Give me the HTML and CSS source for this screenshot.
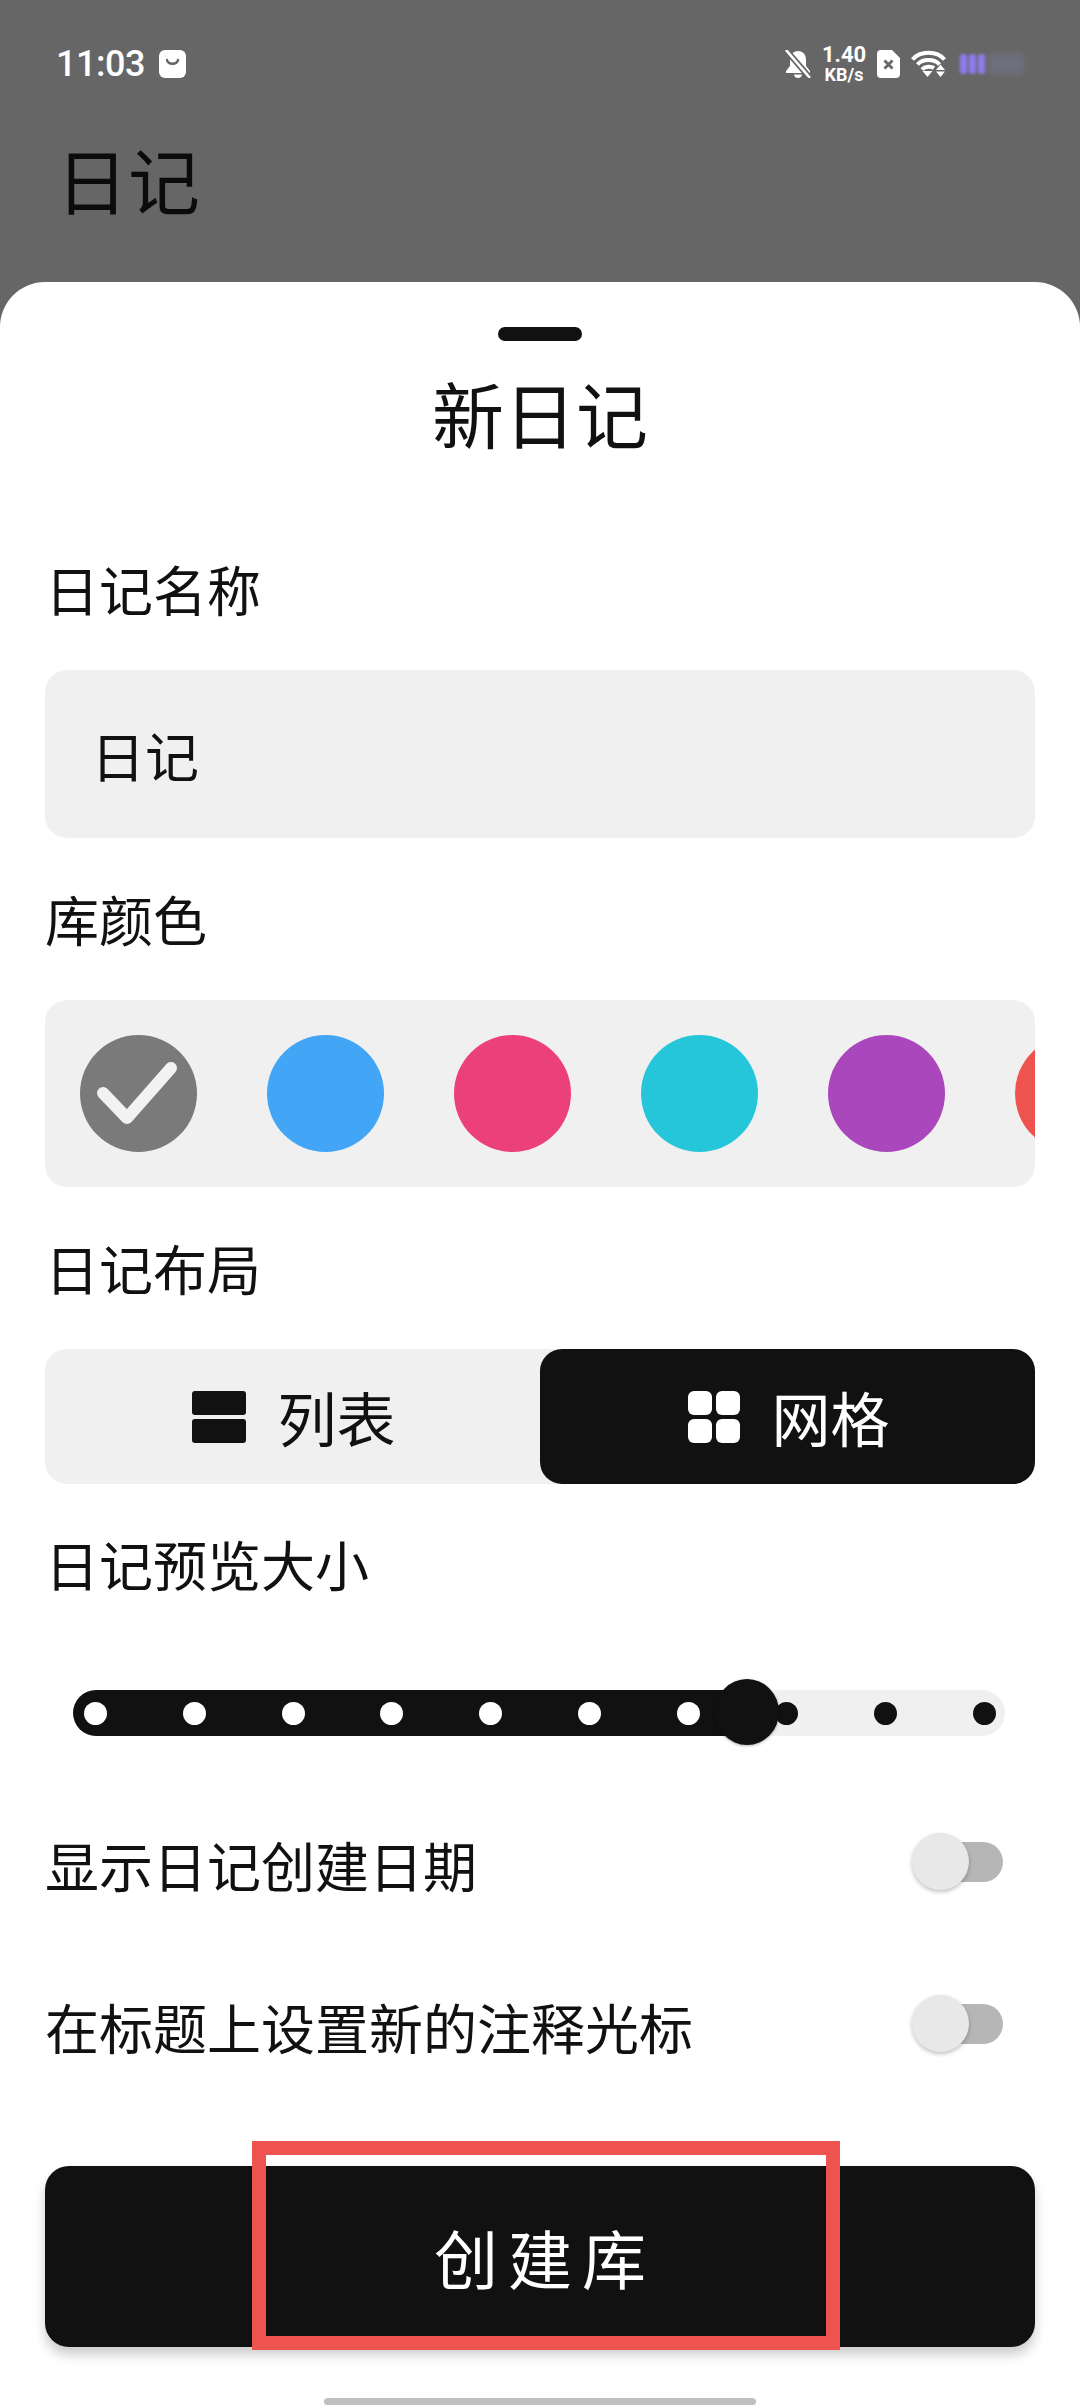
FILE: index.html
```html
<!DOCTYPE html>
<html lang="zh-CN">
<head>
  <meta charset="UTF-8" />
  <meta name="viewport" content="width=device-width, initial-scale=1" />
  <title>新日记</title>
  <link rel="stylesheet" href="styles.css">
</head>
<body>
  <div class="screen">

    <div class="status-bar">
      <div class="status-left">
        <span class="clock">11:03</span>
        <svg class="bag-icon" width="27" height="28" viewBox="0 0 27 28">
          <rect width="27" height="28" rx="6" fill="#fff" />
          <path d="M8 10c1 5 10 5 11 0" fill="none" stroke="#666" stroke-width="2.4" stroke-linecap="round" />
        </svg>
      </div>
      <div class="status-right">
        <svg width="26" height="28" viewBox="0 0 26 28">
          <path d="M13 1c-5 0-8 3.500-8 9v6l-4 5v2h24v-2l-4-5v-6c0-5.500-3-9-8-9z" fill="#fff" />
          <path d="M9 24.500h8c0 2-1.800 3.500-4 3.500s-4-1.500-4-3.500z" fill="#fff" />
          <path d="M1 0l24 28" stroke="#666" stroke-width="6" />
          <path d="M1 0l24 28" stroke="#fff" stroke-width="2.600" />
        </svg>
        <div class="speed">
          <span class="speed-value">1.40</span>
          <span class="speed-unit">KB/s</span>
        </div>
        <svg width="23" height="28" viewBox="0 0 23 28">
          <path d="M4 0h11l8 8v16a4 4 0 0 1-4 4H4a4 4 0 0 1-4-4V4a4 4 0 0 1 4-4z" fill="#fff" />
          <path d="M7.500 10.500l8 8M15.500 10.500l-8 8" stroke="#666" stroke-width="2.800" />
        </svg>
        <svg class="wifi-icon" width="35" height="27" viewBox="0 0 35 27">
          <path d="M1.500 9.500C9 .5 26 .5 33.500 9.500" fill="none" stroke="#fff" stroke-width="4" />
          <path d="M6.500 14.500c5-6 17-6 22 0" fill="none" stroke="#fff" stroke-width="4" />
          <path d="M11 19.500c3-3.500 9-3.500 12-1.500" fill="none" stroke="#fff" stroke-width="4" />
          <path d="M11.500 21h10L16.500 27z" fill="#fff" />
          <path d="M29.500 14.500l4.500 5.500h-9zM25 21.500h9l-4.500 5.500z" fill="#fff" />
        </svg>
        <div class="battery">
          <span class="battery-cell"></span>
          <span class="battery-cell"></span>
          <span class="battery-cell"></span>
          <span class="battery-rest"></span>
        </div>
      </div>
    </div>

    <div class="app-title">日记</div>

    <div class="sheet">
      <div class="handle"></div>
      <h2 class="sheet-title">新日记</h2>

      <div class="label label-first">日记名称</div>
      <div class="name-input">日记</div>

      <div class="label">库颜色</div>
      <div class="colors">
        <div class="swatch swatch-grey">
          <svg width="117" height="117" viewBox="0 0 117 117">
            <path d="M23 58l24 25 44-50" fill="none" stroke="#f2f2f2" stroke-width="12" stroke-linecap="round" stroke-linejoin="round" />
          </svg>
        </div>
        <div class="swatch swatch-blue"></div>
        <div class="swatch swatch-pink"></div>
        <div class="swatch swatch-cyan"></div>
        <div class="swatch swatch-purple"></div>
        <div class="swatch swatch-red"></div>
      </div>

      <div class="label">日记布局</div>
      <div class="segments">
        <div class="segment">
          <svg width="54" height="52" viewBox="0 0 54 52">
            <rect width="54" height="24" rx="3" fill="#111" />
            <rect y="28" width="54" height="24" rx="3" fill="#111" />
          </svg>
          <span>列表</span>
        </div>
        <div class="segment segment-active">
          <svg width="52" height="52" viewBox="0 0 52 52">
            <rect width="24" height="24" rx="6" fill="#fff" />
            <rect x="28" width="24" height="24" rx="6" fill="#fff" />
            <rect y="28" width="24" height="24" rx="6" fill="#fff" />
            <rect x="28" y="28" width="24" height="24" rx="6" fill="#fff" />
          </svg>
          <span>网格</span>
        </div>
      </div>

      <div class="label label-tight">日记预览大小</div>
      <div class="slider">
        <div class="slider-fill"></div>
        <div class="slider-dots">
          <span class="dot dot-on"></span>
          <span class="dot dot-on"></span>
          <span class="dot dot-on"></span>
          <span class="dot dot-on"></span>
          <span class="dot dot-on"></span>
          <span class="dot dot-on"></span>
          <span class="dot dot-on"></span>
          <span class="dot"></span>
          <span class="dot"></span>
          <span class="dot"></span>
        </div>
        <div class="slider-thumb"></div>
      </div>

      <div class="option option-first">
        <span>显示日记创建日期</span>
        <div class="toggle"><div class="toggle-knob"></div></div>
      </div>
      <div class="option">
        <span>在标题上设置新的注释光标</span>
        <div class="toggle"><div class="toggle-knob"></div></div>
      </div>

      <div class="create-btn">创建库</div>
      <div class="home-bar"></div>
    </div>

    <div class="highlight"></div>
  </div>
</body>
</html>
```

FILE: styles.css
```css
* {
  box-sizing: border-box;
}
body {
  margin: 0;
  background: #666;
  font-family: "Noto Sans CJK SC", "Noto Sans", sans-serif;
  color: #111;
}
.screen {
  position: relative;
  width: 1080px;
  height: 2408px;
  overflow: hidden;
  background: #666;
}

/* status bar */
.status-bar {
  height: 47px;
  margin-top: 40px;
  padding: 0 56px;
  display: flex;
  justify-content: space-between;
  align-items: center;
  color: #fff;
  font-family: Roboto, sans-serif;
}
.status-left {
  display: flex;
  align-items: center;
  gap: 14px;
}
.clock {
  padding-top: 2px;
  font-size: 36px;
  font-weight: 500;
  line-height: 47px;
  letter-spacing: -0.5px;
}
.status-right {
  display: flex;
  align-items: center;
}
.speed {
  margin: 0 11px;
  width: 44px;
  display: flex;
  flex-direction: column;
  align-items: center;
  font-weight: 700;
}
.speed-value {
  font-size: 22px;
  line-height: 22px;
}
.speed-unit {
  font-size: 18px;
  line-height: 18px;
}
.wifi-icon {
  margin-left: 11px;
}
.battery {
  margin-left: 14px;
  width: 64px;
  height: 20px;
  display: flex;
  gap: 2px;
  filter: blur(1.5px);
}
.battery-cell {
  width: 7px;
  background: #8f7cf0;
  border-radius: 3px;
}
.battery-rest {
  flex: 1;
  margin-left: 2px;
  background: #6f6f7f;
  filter: blur(3px);
}

.app-title {
  height: 90px;
  margin-top: 46px;
  padding-left: 56px;
  font-size: 72px;
  line-height: 90px;
  color: #0b0b0b;
}

/* bottom sheet */
.sheet {
  position: absolute;
  top: 282px;
  left: 0;
  right: 0;
  bottom: 0;
  padding: 45px 45px 0;
  background: #fff;
  border-radius: 45px 45px 0 0;
}
.handle {
  width: 84px;
  height: 14px;
  margin: 0 auto;
  background: #111;
  border-radius: 7px;
}
.sheet-title {
  margin: 30px 0 0;
  height: 90px;
  font-size: 72px;
  font-weight: 400;
  line-height: 82px;
  text-align: center;
}
.label {
  height: 70px;
  margin: 46px 0;
  font-size: 54px;
  line-height: 70px;
}
.label-first {
  margin-top: 93px;
}
.label-tight {
  margin-top: 45px;
}
.name-input {
  height: 168px;
  padding-left: 46px;
  background: #f0f0f1;
  border-radius: 22px;
  font-size: 54px;
  line-height: 170px;
}
.colors {
  height: 187px;
  padding-left: 35px;
  display: flex;
  align-items: center;
  gap: 70px;
  background: #f0f0f1;
  border-radius: 22px;
  overflow: hidden;
}
.swatch {
  flex: none;
  width: 117px;
  height: 117px;
  border-radius: 50%;
}
.swatch svg {
  display: block;
}
.swatch-grey { background: #7a7a7a; }
.swatch-blue { background: #42a5f5; }
.swatch-pink { background: #ec407a; }
.swatch-cyan { background: #26c6da; }
.swatch-purple { background: #ab47bc; }
.swatch-red { background: #ef5350; }

.segments {
  height: 135px;
  display: flex;
  background: #f0f0f1;
  border-radius: 22px;
}
.segment {
  flex: 1;
  padding-left: 3px;
  display: flex;
  align-items: center;
  justify-content: center;
  gap: 31px;
  font-size: 59px;
  border-radius: 22px;
}
.segment-active {
  background: #111;
  color: #fff;
}

.slider {
  position: relative;
  height: 46px;
  margin: 91px 30px 0 28px;
  background: #f0f0f1;
  border-radius: 23px;
}
.slider-fill {
  position: absolute;
  top: 0;
  bottom: 0;
  left: 0;
  width: 675px;
  background: #111;
  border-radius: 23px 0 0 23px;
}
.slider-dots {
  position: relative;
  height: 100%;
  padding: 0 9px 0 11px;
  display: flex;
  align-items: center;
  justify-content: space-between;
}
.dot {
  width: 23px;
  height: 23px;
  background: #111;
  border-radius: 50%;
}
.dot-on {
  background: #fff;
}
.slider-thumb {
  position: absolute;
  top: -11px;
  left: 642px;
  width: 64px;
  height: 66px;
  background: #111;
  border-radius: 50%;
  box-shadow: 0 1px 3px rgba(0,0,0,0.3);
}

.option {
  height: 70px;
  margin-top: 92px;
  display: flex;
  align-items: center;
  justify-content: space-between;
  font-size: 54px;
}
.option-first {
  margin-top: 93px;
}
.toggle {
  position: relative;
  width: 78px;
  height: 40px;
  margin: 0 32px 4px 0;
  background: #b6b6b6;
  border-radius: 20px;
}
.toggle-knob {
  position: absolute;
  top: -9px;
  left: -13px;
  width: 57px;
  height: 57px;
  background: #e8e8e8;
  border-radius: 50%;
  box-shadow: 0 2px 4px rgba(0,0,0,0.25);
}

.create-btn {
  height: 181px;
  margin-top: 105px;
  padding-left: 10px;
  background: #111;
  color: #fff;
  border-radius: 24px;
  font-size: 64px;
  line-height: 180px;
  letter-spacing: 10px;
  text-align: center;
  box-shadow: 0 8px 12px rgba(0,0,0,0.2);
}
.home-bar {
  width: 432px;
  height: 7px;
  margin: 51px auto 0;
  background: #c0c0c0;
  border-radius: 4px;
}

/* red box drawn over the button */
.highlight {
  position: absolute;
  left: 252px;
  top: 2141px;
  width: 588px;
  height: 209px;
  border: 14px solid #ef5350;
}
```
